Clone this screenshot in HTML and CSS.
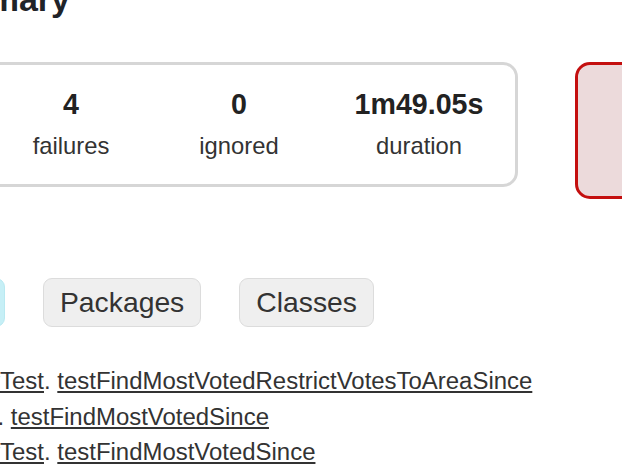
FILE: index.html
```html
<!DOCTYPE html>
<html>
<head>
<meta charset="utf-8">
<link rel="stylesheet" href="styles.css">
</head>
<body>
<div class="page">
  <h1 class="title">Test Summary</h1>
  <div class="summary">
    <div class="group">
      <div class="info"><div class="counter">44</div><p class="label">tests</p></div>
      <div class="info"><div class="counter">4</div><p class="label">failures</p></div>
      <div class="info"><div class="counter">0</div><p class="label">ignored</p></div>
      <div class="info wide"><div class="counter">1m49.05s</div><p class="label">duration</p></div>
    </div>
    <div class="rate">
      <div class="counter">90%</div>
      <p class="label">successful</p>
    </div>
  </div>
  <ul class="tabs">
    <li class="tab sel">Failed tests</li>
    <li class="tab">Packages</li>
    <li class="tab">Classes</li>
  </ul>
  <ul class="fails">
    <li><span class="cls long"><a href="#">VoteRepositoryTest</a></span>. <a href="#">testFindMostVotedRestrictVotesToAreaSince</a></li>
    <li><span class="cls short"><a href="#">VoteRepoTest</a></span>. <a href="#">testFindMostVotedSince</a></li>
    <li><span class="cls long"><a href="#">VoteRepositoryTest</a></span>. <a href="#">testFindMostVotedSince</a></li>
  </ul>
</div>
</body>
</html>
```
FILE: styles.css
```css
html, body {
  margin: 0;
  padding: 0;
  background: #ffffff;
}
body {
  font-family: "Liberation Sans", Arial, sans-serif;
  color: #333333;
  overflow: hidden;
}
.page {
  width: 1200px;
}
.title {
  width: 400px;
  margin: -18px 0 0 -330px;
  text-align: right;
  font-size: 34px;
  line-height: 34px;
  font-weight: bold;
  color: #1f2328;
}
.summary {
  display: flex;
  align-items: flex-start;
  gap: 57px;
  margin-top: 46px;
}
.group {
  display: flex;
  margin-left: -200px;
  padding-left: 16px;
  height: 125px;
  box-sizing: border-box;
  border: 3px solid #d6d6d6;
  border-radius: 15px;
}
.info {
  width: 168px;
  text-align: center;
  padding-top: 22px;
}
.info.wide {
  width: 192px;
}
.counter {
  font-size: 28.6px;
  line-height: 34px;
  font-weight: bold;
  color: #222222;
}
.label {
  margin: 10px 0 0;
  font-size: 23.8px;
  line-height: 30px;
  color: #333333;
}
.rate {
  width: 260px;
  height: 137px;
  box-sizing: border-box;
  border: 3px solid #c40f0f;
  border-radius: 15px;
  background: #ecdadb;
  text-align: center;
  padding-top: 30px;
  color: #b60808;
}
.rate .counter {
  color: #b60808;
}
.rate .label {
  color: #b60808;
}
.tabs {
  list-style: none;
  margin: 79px 0 0 -175px;
  padding: 0;
  display: flex;
  gap: 38px;
}
.tab {
  font-size: 28.3px;
  line-height: 33px;
  padding: 7px 16px;
  border: 1px solid #dcdcdc;
  border-radius: 9px;
  background: #efefef;
  color: #333333;
}
.tab.sel {
  width: 180px;
  box-sizing: border-box;
  background: #c6eff6;
  border-color: #b9e9f1;
  text-align: center;
}
.fails {
  list-style: none;
  margin: 36px 0 0 -300px;
  padding: 0;
  font-size: 23.95px;
  line-height: 35.5px;
  color: #333333;
}
.fails a {
  color: #333333;
  text-decoration: underline;
}
.cls {
  display: inline-block;
  text-align: right;
  white-space: nowrap;
}
.cls.long {
  width: 344px;
}
.cls.short {
  width: 297.5px;
}
```
